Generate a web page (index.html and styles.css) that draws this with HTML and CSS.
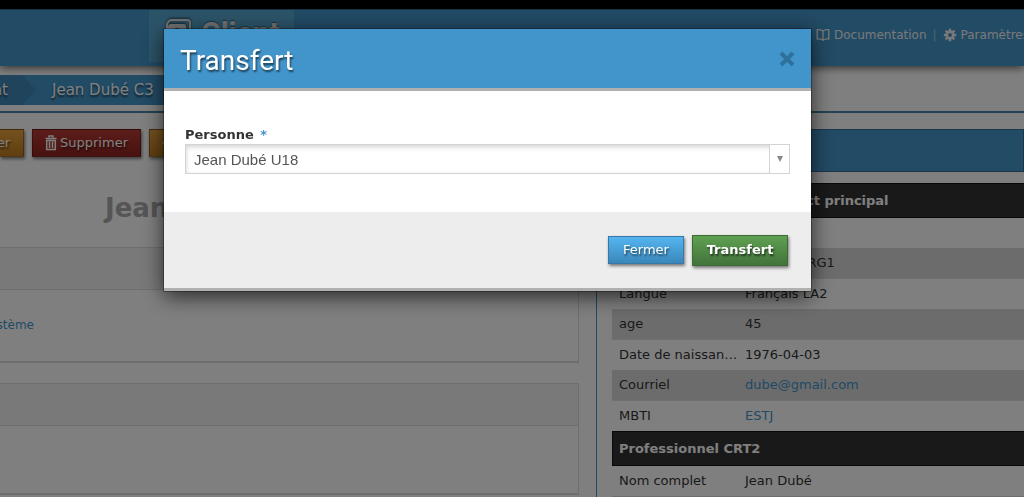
FILE: index.html
```html
<!DOCTYPE html>
<html lang="fr">
<head>
    <meta charset="UTF-8">
    <meta name="viewport" content="width=device-width, initial-scale=1.0">
    <title>Client - Jean Dubé C3</title>
    <link rel="stylesheet" href="styles.css">
</head>
<body>

    <div class="page">
        <header class="site-header">
            <a class="module-tab" href="#">
                <svg width="26" height="28" viewBox="0 0 26 28" fill="none" stroke="#e6e6e6" stroke-width="2">
                    <path d="M1 23V6Q2 1 6 1h15q3 0 3 3v15"/>
                    <path d="M2 8Q2 5 5 5h13q2 0 2 2v18H4q-2 0-2-2z" fill="#e6e6e6" stroke="none"/>
                    <circle cx="11" cy="12" r="3" fill="#2f698e" stroke="none"/>
                    <path d="M6 21q0-5 5-5t5 5z" fill="#2f698e" stroke="none"/>
                </svg>
                <span>Client</span>
            </a>
            <nav class="top-nav">
                <a href="#">
                    <svg width="14" height="14" viewBox="0 0 14 14" fill="none" stroke="currentColor" stroke-width="1.3">
                        <path d="M7 3Q5 1.3 1.2 1.7V11Q5 10.6 7 12.3Q9 10.6 12.8 11V1.7Q9 1.3 7 3V12.3"/>
                    </svg>
                    Documentation</a>
                <span class="divider">|</span>
                <a href="#">
                    <svg width="14" height="14" viewBox="0 0 14 14" fill="none" stroke="currentColor">
                        <circle cx="7" cy="7" r="3.3" stroke-width="2.6"/>
                        <path d="M7 0.8V3M7 11v2.2M0.8 7H3M11 7h2.2M2.6 2.6l1.6 1.6M9.8 9.8l1.6 1.6M11.4 2.6L9.8 4.2M4.2 9.8L2.6 11.4" stroke-width="2.5"/>
                    </svg>
                    Paramètres</a>
            </nav>
        </header>

        <nav class="breadcrumb">
            <a class="crumb crumb-parent" href="#">Client</a>
            <a class="crumb" href="#">Jean Dubé C3</a>
        </nav>

        <div class="columns">
            <main class="content">
                <div class="toolbar">
                    <button class="btn btn-orange btn-edit" type="button">Modifier</button>
                    <button class="btn btn-red" type="button">
                        <svg width="12" height="16" viewBox="0 0 12 16" fill="none" stroke="currentColor">
                            <path d="M4 2.5V1h4v1.5M0.5 3.5h11M1.5 5.5h9" stroke-width="1.4"/>
                            <path d="M1.7 5v9.5h8.6V5M4.5 6.5v6.5M7.5 6.5v6.5" stroke-width="1.5"/>
                        </svg>
                        Supprimer
                    </button>
                    <button class="btn btn-orange" type="button" aria-label="Transférer">
                        <svg width="14" height="14" viewBox="0 0 14 14" fill="currentColor"><path d="M0 7l6-5v3h8v4H6v3z"/></svg>
                    </button>
                </div>
                <h1 class="record-title">Jean Dubé C3</h1>
                <section class="panel">
                    <div class="panel-header"></div>
                    <div class="panel-body"><a class="system-link" href="#">Système</a></div>
                </section>
                <section class="panel">
                    <div class="panel-header"></div>
                    <div class="panel-body panel-body-small"></div>
                </section>
            </main>

            <aside class="sidebar">
                <div class="sidebar-header"></div>
                <table class="details">
                    <colgroup>
                        <col class="col-label">
                        <col>
                    </colgroup>
                    <thead>
                        <tr><th colspan="2">Jean Dubé C3 CRT - Contact principal</th></tr>
                    </thead>
                    <tbody>
                        <tr><td>Prénom</td><td>Jean</td></tr>
                        <tr><td>Nom</td><td>Société ORG1</td></tr>
                        <tr><td>Langue</td><td>Français LA2</td></tr>
                        <tr><td>age</td><td>45</td></tr>
                        <tr><td>Date de naissance</td><td>1976-04-03</td></tr>
                        <tr><td>Courriel</td><td><a href="#">dube@gmail.com</a></td></tr>
                        <tr><td>MBTI</td><td><a href="#">ESTJ</a></td></tr>
                    </tbody>
                    <tbody>
                        <tr><th colspan="2">Professionnel CRT2</th></tr>
                    </tbody>
                    <tbody>
                        <tr><td>Nom complet</td><td>Jean Dubé</td></tr>
                        <tr><td></td><td></td></tr>
                    </tbody>
                </table>
            </aside>
        </div>
    </div>

    <div class="overlay">
        <form class="modal" role="dialog" aria-labelledby="modal-title">
            <div class="modal-header">
                <h2 id="modal-title">Transfert</h2>
                <button class="close" type="button" aria-label="Fermer">
                    <svg width="16" height="16" viewBox="0 0 16 16" stroke="currentColor" stroke-width="4"><path d="M2 2l12 12M14 2L2 14"/></svg>
                </button>
            </div>
            <div class="modal-body">
                <label for="personne">Personne <span class="required">*</span></label>
                <div class="select-box">
                    <select id="personne">
                        <option>Jean Dubé U18</option>
                    </select>
                    <span class="select-arrow">
                        <svg width="6" height="6" viewBox="0 0 6 6"><path d="M0 0h6L3 6z" fill="#888"/></svg>
                    </span>
                </div>
            </div>
            <div class="modal-footer">
                <button class="btn btn-blue" type="button">Fermer</button>
                <button class="btn btn-green" type="submit">Transfert</button>
            </div>
        </form>
    </div>

</body>
</html>
```
FILE: styles.css
```css
* { margin: 0; padding: 0; box-sizing: border-box; }
body {
    font-family: Verdana, 'DejaVu Sans', sans-serif;
    font-size: 13px;
    line-height: 18px;
    color: #333;
    background: #fff;
}
a { color: #4295cb; text-decoration: none; }
.page { height: 100vh; overflow: hidden; border-top: 9px solid #000; }

/* Header */
.site-header {
    display: flex;
    justify-content: space-between;
    height: 57px;
    padding-left: 149px;
    background: #4496ca;
    border-top: 1px solid #2f698e;
    box-shadow: 0 2px 8px rgba(0, 0, 0, 0.6);
}
.module-tab {
    display: flex;
    align-items: center;
    gap: 9px;
    width: 145px;
    height: 52px;
    padding: 0 17px 6px;
    background: #58a9d2;
    color: #e6e6e6;
    font: bold 30px/34px Roboto, sans-serif;
    text-shadow: 0 -1px 1px rgba(0, 0, 0, 0.4);
}
.module-tab svg { flex: none; filter: drop-shadow(0 -1px 1px rgba(0, 0, 0, 0.6)); }
.top-nav {
    display: flex;
    gap: 6px;
    width: 208px;
    padding-top: 16px;
    overflow: hidden;
    font-size: 12px;
    white-space: nowrap;
}
.top-nav a { display: flex; align-items: center; gap: 4px; height: 18px; color: #f2f2f2; }
.top-nav svg { flex: none; }
.divider { color: #a0c8e2; }

/* Breadcrumb */
.breadcrumb { display: flex; width: fit-content; height: 30px; margin-top: 9px; padding-right: 24px; background: #4496ca; }
.crumb {
    padding: 0 16px;
    color: #fff;
    font-size: 15px;
    line-height: 30px;
    text-shadow: 0 2px 2px rgba(0, 0, 0, 0.6);
}
.crumb-parent {
    display: flex;
    justify-content: flex-end;
    width: 36px;
    padding: 0 28px 0 0;
    overflow: hidden;
    background: #3e88b8;
    clip-path: polygon(0 0, 22px 0, 100% 50%, 22px 100%, 0 100%);
}

.columns { display: flex; margin-top: 6px; padding-top: 16px; border-top: 2px solid #4a82a8; }

/* Left column */
.content { flex: 0 0 579px; }
.toolbar { display: flex; gap: 8px; }
.btn {
    display: flex;
    align-items: center;
    justify-content: center;
    gap: 3px;
    height: 28px;
    padding: 0 12px;
    color: #fff;
    font: 13px/18px Verdana, 'DejaVu Sans', sans-serif;
    border: 1px solid rgba(0, 0, 0, 0.3);
    box-shadow: 1px 2px 3px rgba(0, 0, 0, 0.5);
    text-shadow: 1px 2px 2px rgba(0, 0, 0, 0.6);
}
.btn-orange { background: linear-gradient(#e8a33d, #c17d20); }
.btn-red { width: 109px; background: linear-gradient(#b93a35, #8f2420); }
.btn-blue { width: 76px; background: linear-gradient(#55b5f0, #3a87ba); border-color: #3878a6; }
.btn-green {
    width: 96px;
    height: 31px;
    background: linear-gradient(#5fa052, #41743a);
    border-color: #3c6b34;
    font-weight: bold;
}
.btn-edit { justify-content: flex-end; width: 24px; padding: 0 13px 0 0; border-left: 0; overflow: hidden; }
.record-title { padding: 34px 0 22px 105px; font-size: 26px; line-height: 34px; color: #aaa; }
.panel { margin-bottom: 20px; border: 1px solid #dcdcdc; border-left: 0; border-bottom: 2px solid #dcdcdc; }
.panel-header { height: 42px; background: #f2f2f2; border-bottom: 1px solid #dcdcdc; }
.panel-body { height: 71px; padding-top: 26px; }
.panel-body-small { height: 67px; }
.system-link { display: flex; justify-content: flex-end; width: 34px; font-size: 12px; }

/* Right column */
.sidebar { flex: 1; min-width: 0; margin-left: 17px; border-left: 1px solid #4496ca; }
.sidebar-header { height: 43px; background: #4496ca; border: 1px solid #356f95; }
.details { width: calc(100% - 15px); margin: 11px 0 0 15px; border-spacing: 0; table-layout: fixed; }
.col-label { width: 126px; }
.details th {
    height: 35px;
    padding: 0 6px;
    background: #333;
    border: 1px solid #111;
    border-right: 0;
    color: #fff;
    text-align: left;
}
.details td {
    height: 30px;
    padding: 0 0 0 7px;
    overflow: hidden;
    white-space: nowrap;
    text-overflow: ellipsis;
}
.details tr:nth-child(even) td { height: 31px; background: #d8d8d8; border-bottom: 1px solid #e0e0e0; }

/* Modal */
.overlay {
    position: fixed;
    inset: 0;
    display: flex;
    align-items: flex-start;
    padding: 29px 213px 0 164px;
    background: rgba(0, 0, 0, 0.5);
}
.modal {
    flex: 1;
    background: #fff;
    border-bottom: 3px solid #b0b0b0;
    box-shadow: 0 0 0 1px rgba(0, 0, 0, 0.3), 0 5px 20px rgba(0, 0, 0, 0.7);
}
.modal-header {
    display: flex;
    align-items: center;
    justify-content: space-between;
    height: 62px;
    padding: 0 16px;
    background: #4295cb;
    border-bottom: 3px solid #b0b0b0;
}
.modal-header h2 {
    padding-top: 4px;
    color: #fff;
    font: 28px/36px Roboto, sans-serif;
    text-shadow: 1px 2px 2px rgba(0, 0, 0, 0.6);
}
.close { display: flex; background: none; border: 0; color: #2f719d; }
.modal-body { padding: 35px 21px 38px; }
.modal-body label { display: block; font-weight: bold; }
.required { margin-left: 2px; color: #4295cb; }
.select-box { position: relative; display: flex; height: 30px; }
.select-box select {
    flex: 1;
    appearance: none;
    padding: 0 30px 0 8px;
    color: #555;
    font: 15px 'Liberation Sans', Arial, sans-serif;
    background: #fff;
    border: 1px solid #d4d4d4;
    box-shadow: inset 0 2px 5px rgba(0, 0, 0, 0.18);
}
.select-arrow {
    position: absolute;
    inset: 0 0 0 auto;
    display: flex;
    align-items: center;
    justify-content: center;
    width: 21px;
    background: #fff;
    border: 1px solid #d4d4d4;
    pointer-events: none;
}
.modal-footer {
    display: flex;
    align-items: center;
    justify-content: flex-end;
    gap: 8px;
    height: 76px;
    padding: 0 23px;
    background: #ededed;
}
```
